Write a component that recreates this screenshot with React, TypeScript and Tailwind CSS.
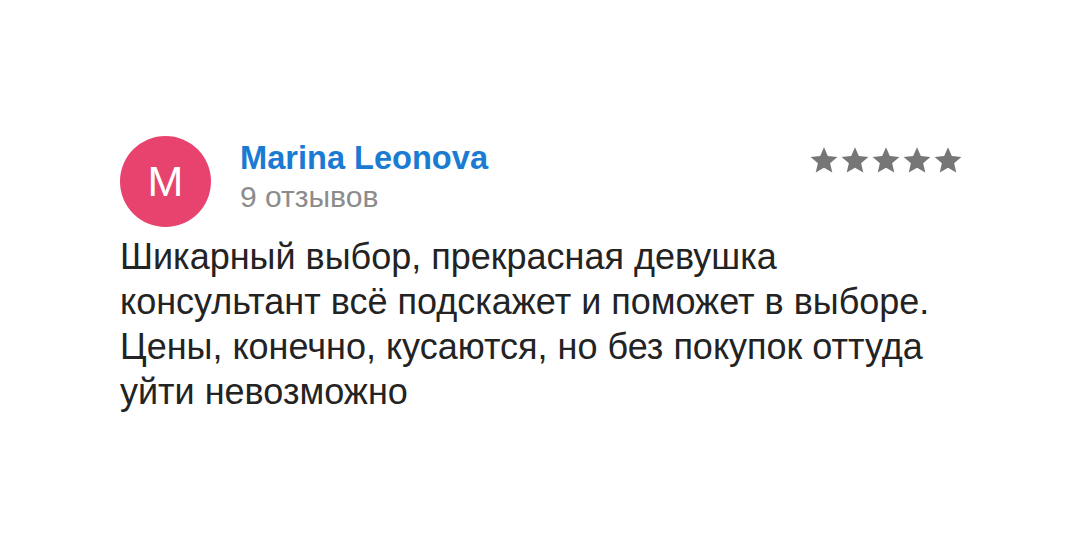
const Star = () => (
  <svg viewBox="0 0 24 24" className="h-[30px] w-[30px]" fill="#767676">
    <path d="M12 1.8l3.05 7.05 7.65.65-5.8 5.05 1.75 7.5L12 18.1l-6.65 3.95 1.75-7.5-5.8-5.05 7.65-.65z" />
  </svg>
);

export default function App() {
  return (
    <div className="h-[536px] w-[1080px] bg-white pl-[120px] pt-[136px] font-['Liberation_Sans',Arial,sans-serif]">
      <div className="w-[843px]">
        <div className="flex items-start justify-between">
          <div className="flex items-start gap-[29px]">
            <div className="flex h-[91px] w-[91px] items-center justify-center rounded-full bg-[#e8426f] text-[43px] font-light leading-none text-white">
              M
            </div>
            <div className="flex flex-col gap-[3px] pt-[3px]">
              <span className="text-[32.6px] font-bold leading-[38px] text-[#1b7bd3]">
                Marina Leonova
              </span>
              <span className="text-[30px] leading-[34px] text-[#8c8c8c]">9 отзывов</span>
            </div>
          </div>
          <div className="mt-[9px] flex gap-[1px]">
            <Star />
            <Star />
            <Star />
            <Star />
            <Star />
          </div>
        </div>
        <p className="mt-[7px] text-[36px] leading-[45px] text-[#232323]">
          Шикарный выбор, прекрасная девушка
          <br />
          консультант всё подскажет и поможет в выборе.
          <br />
          Цены, конечно, кусаются, но без покупок оттуда
          <br />
          уйти невозможно
        </p>
      </div>
    </div>
  );
}
